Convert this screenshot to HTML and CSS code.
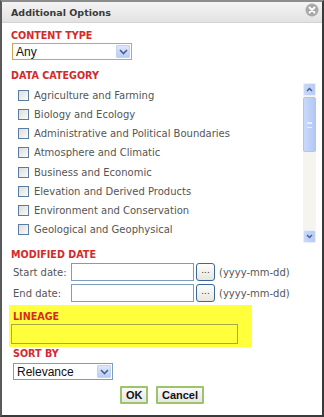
FILE: index.html
```html
<!DOCTYPE html>
<html lang="en">
<head>
  <meta charset="UTF-8" />
  <title>Additional Options</title>
  <link rel="stylesheet" href="styles.css">
</head>
<body>
  <div class="dialog">
    <div class="titlebar">
      <span class="title">Additional Options</span>
      <span class="close">
        <svg width="14" height="14" viewBox="0 0 14 14">
          <circle cx="7" cy="7" r="6.5" fill="#a9a9a9"/>
          <path d="M4.5 4.5 L9.5 9.5 M9.5 4.5 L4.5 9.5" stroke="#fff" stroke-width="1.8" stroke-linecap="round"/>
        </svg>
      </span>
    </div>

    <div class="content">
      <h3>CONTENT TYPE</h3>
      <div class="select select-type focus">
        <span class="select-text">Any</span>
        <span class="arrow"><svg width="9" height="6" viewBox="0 0 9 6"><path d="M1 1 L4.5 4.5 L8 1" fill="none" stroke="#4d6185" stroke-width="1.6"/></svg></span>
      </div>

      <h3 class="gap">DATA CATEGORY</h3>
      <div class="listbox">
        <div class="items">
          <label class="item"><span class="check"></span>Agriculture and Farming</label>
          <label class="item"><span class="check"></span>Biology and Ecology</label>
          <label class="item"><span class="check"></span>Administrative and Political Boundaries</label>
          <label class="item"><span class="check"></span>Atmosphere and Climatic</label>
          <label class="item"><span class="check"></span>Business and Economic</label>
          <label class="item"><span class="check"></span>Elevation and Derived Products</label>
          <label class="item"><span class="check"></span>Environment and Conservation</label>
          <label class="item"><span class="check"></span>Geological and Geophysical</label>
        </div>
        <div class="scrollbar">
          <span class="sb-btn"><svg width="7" height="5" viewBox="0 0 7 5"><path d="M1 4 L3.5 1.5 L6 4" fill="none" stroke="#4d6185" stroke-width="1.5"/></svg></span>
          <span class="sb-thumb"><span class="grip"></span></span>
          <span class="sb-track"></span>
          <span class="sb-btn"><svg width="7" height="5" viewBox="0 0 7 5"><path d="M1 1 L3.5 3.5 L6 1" fill="none" stroke="#4d6185" stroke-width="1.5"/></svg></span>
        </div>
      </div>

      <h3 class="date-head">MODIFIED DATE</h3>
      <div class="date-row">
        <span class="date-label">Start date:</span>
        <span class="input date-input"></span>
        <span class="dots">...</span>
        <span class="hint">(yyyy-mm-dd)</span>
      </div>
      <div class="date-row">
        <span class="date-label">End date:</span>
        <span class="input date-input"></span>
        <span class="dots">...</span>
        <span class="hint">(yyyy-mm-dd)</span>
      </div>

      <div class="lineage">
        <h3>LINEAGE</h3>
        <span class="input lineage-input"></span>
      </div>

      <h3 class="sort">SORT BY</h3>
      <div class="select select-sort">
        <span class="select-text">Relevance</span>
        <span class="arrow"><svg width="9" height="6" viewBox="0 0 9 6"><path d="M1 1 L4.5 4.5 L8 1" fill="none" stroke="#4d6185" stroke-width="1.6"/></svg></span>
      </div>

      <div class="buttons">
        <button class="btn btn-ok">OK</button>
        <button class="btn">Cancel</button>
      </div>
    </div>
  </div>
</body>
</html>
```

FILE: styles.css
```css
* {
  box-sizing: border-box;
  margin: 0; padding: 0;
}
body {
  font-family: "DejaVu Sans", Verdana, sans-serif;
  background: #fff;
  color: #444;
}

.dialog {
  width: 324px;
  height: 417px;
  border-top: 2px solid #8c8c8c;
  border-left: 2px solid #5a5a5a;
  border-right: 2px solid #3a3a3a;
  border-bottom: 2px solid #3a3a3a;
  background: #fff;
}

.titlebar {
  height: 21px;
  display: flex;
  align-items: center;
  justify-content: space-between;
  padding: 0 3px 0 9px;
  background: linear-gradient(#f4f4f4, #e2e2e2);
  border-bottom: 1px solid #d4d4d4;
}
.title {
  font-size: 9.5px;
  font-weight: bold;
  color: #3a3a3a;
}
.close {
  display: flex;
  margin-top: -5px;
}

.content {
  padding: 6px 0 0 9px;
}

h3 {
  font-size: 9.6px;
  font-weight: bold;
  color: #d42a2a;
  line-height: 13px;
}
h3.gap {
  margin-top: 9px;
}

.select {
  display: flex;
  align-items: center;
  justify-content: space-between;
  height: 17px;
  border: 1px solid #7f9db9;
  background: #fff;
  padding: 0 1px 0 3px;
  font-family: "Liberation Sans", Arial, sans-serif;
  font-size: 12px;
  color: #111;
}
.select.focus {
  border-color: #d3a352;
}
.select-type {
  width: 120px;
  margin: 1px 0 0 1px;
}
.select-sort {
  width: 100px;
  margin: 3px 0 0 2px;
}
.arrow {
  width: 14px;
  height: 13px;
  display: flex;
  align-items: center;
  justify-content: center;
  background: linear-gradient(#dde7fd, #b9ccf6);
  border: 1px solid #c2d2f3;
  border-radius: 1px;
}

.listbox {
  display: flex;
  justify-content: space-between;
  height: 162px;
  padding-right: 6px;
}
.items {
  padding: 4px 0 0 7px;
  display: flex;
  flex-direction: column;
}
.item {
  display: flex;
  align-items: center;
  height: 19.15px;
  font-size: 10px;
  color: #555;
  white-space: nowrap;
}
.check {
  width: 11px;
  height: 11px;
  border: 1px solid #5a7ba2;
  background: linear-gradient(135deg, #dcdcd8, #fbfbfa);
  margin-right: 5px;
  flex-shrink: 0;
}

.scrollbar {
  width: 13px;
  display: flex;
  flex-direction: column;
  background: #f5f4ee;
  margin: 1px 0;
}
.sb-btn {
  height: 13px;
  display: flex;
  align-items: center;
  justify-content: center;
  background: linear-gradient(90deg, #c8d8fb, #b7cbf5);
  border: 1px solid #e6eeff;
  border-radius: 2px;
}
.sb-thumb {
  height: 55px;
  margin-top: 1px;
  display: flex;
  align-items: center;
  justify-content: center;
  background: linear-gradient(90deg, #c9d9fc, #b4c8f5);
  border: 1px solid #b2c5ef;
  border-radius: 2px;
}
.grip {
  width: 5px;
  height: 6px;
  border-top: 1px solid #e8efff;
  border-bottom: 1px solid #e8efff;
  box-shadow: inset 0 2px 0 -1px #e8efff;
}
.sb-track {
  flex: 1;
}

h3.date-head {
  margin-top: 4px;
}
.date-row {
  display: flex;
  align-items: center;
  height: 18px;
  margin-top: 2px;
  padding-left: 2px;
  font-size: 10px;
  color: #555;
}
.date-row + .date-row {
  margin-top: 3px;
}
.date-label {
  width: 58px;
}
.input {
  display: block;
  height: 18px;
  border: 1px solid #7f9db9;
  background: #fff;
}
.date-input {
  width: 123px;
}
.dots {
  width: 19px;
  height: 18px;
  margin-left: 2px;
  border: 1px solid #3c6897;
  border-radius: 3px;
  background: linear-gradient(#fdfdfb, #e7e6df);
  font-size: 9px;
  line-height: 13px;
  text-align: center;
  color: #333;
}
.hint {
  margin-left: 4px;
}

.lineage {
  width: 243px;
  height: 42px;
  margin: 3px 0 0 -2px;
  padding: 5px 0 0 4px;
  background: #ffff3c;
}
.lineage-input {
  width: 227px;
  height: 20px;
  margin: 1px 0 0 -2px;
  background: #ffff3c;
  border-color: #a8a84a;
}

h3.sort {
  margin-top: 0;
  padding-left: 2px;
}

.buttons {
  display: flex;
  justify-content: center;
  gap: 8px;
  width: 302px;
  margin-top: 6px;
}
.btn {
  height: 18px;
  padding: 0 4px;
  font-family: "Liberation Sans", Arial, sans-serif;
  font-size: 11px;
  font-weight: bold;
  color: #111;
  background: linear-gradient(#fafafa, #e6e6e6);
  border: 2px solid #9bc46b;
  border-radius: 1px;
}
.btn-ok {
  width: 28px;
}
```
